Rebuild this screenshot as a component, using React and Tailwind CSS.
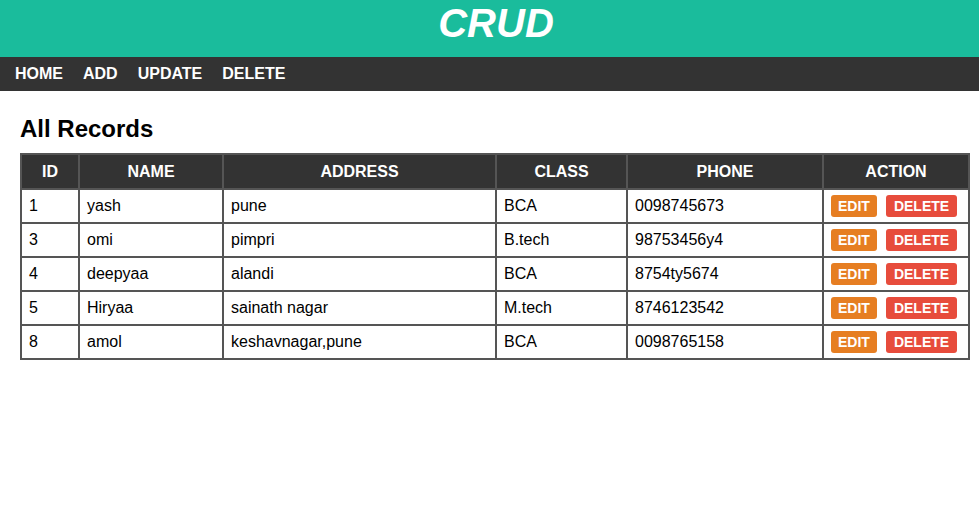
import React from "react";

const records = [
  { id: 1, name: "yash", address: "pune", cls: "BCA", phone: "0098745673" },
  { id: 3, name: "omi", address: "pimpri", cls: "B.tech", phone: "98753456y4" },
  { id: 4, name: "deepyaa", address: "alandi", cls: "BCA", phone: "8754ty5674" },
  { id: 5, name: "Hiryaa", address: "sainath nagar", cls: "M.tech", phone: "8746123542" },
  { id: 8, name: "amol", address: "keshavnagar,pune", cls: "BCA", phone: "0098765158" },
];

const cols = [
  { label: "ID", w: "w-[58px]" },
  { label: "NAME", w: "w-[144px]" },
  { label: "ADDRESS", w: "w-[273px]" },
  { label: "CLASS", w: "w-[131px]" },
  { label: "PHONE", w: "w-[196px]" },
  { label: "ACTION", w: "w-[146px]" },
];

const App = () => {
  return (
    <div className="min-h-screen bg-white text-black font-['Liberation_Sans',Arial,sans-serif]">
      <header className="h-[57px] bg-[#1abc9c] flex items-center justify-center pl-[13px]">
        <h1 className="text-[40px] font-bold italic text-white leading-none -mt-[11px]">CRUD</h1>
      </header>
      <nav className="h-[34px] bg-[#333333] flex items-center pl-[5px]">
        {["HOME", "ADD", "UPDATE", "DELETE"].map((item) => (
          <a key={item} href="#" className="px-[10px] text-base font-bold text-white">
            {item}
          </a>
        ))}
      </nav>

      <main className="px-[20px]">
        <h2 className="text-[24px] font-bold mt-[24px] mb-[10px] leading-[28px]">All Records</h2>
        <table className="table-fixed w-[948px] border-collapse border-2 border-[#555555]">
          <thead>
            <tr className="bg-[#333333] text-white">
              {cols.map((c) => (
                <th key={c.label} className={`${c.w} h-[35px] border-2 border-[#555555] text-base font-bold text-center`}>
                  {c.label}
                </th>
              ))}
            </tr>
          </thead>
          <tbody>
            {records.map((r) => (
              <tr key={r.id} className="h-[34px]">
                <td className="border-2 border-[#555555] px-[7px] text-base">{r.id}</td>
                <td className="border-2 border-[#555555] px-[7px] text-base">{r.name}</td>
                <td className="border-2 border-[#555555] px-[7px] text-base">{r.address}</td>
                <td className="border-2 border-[#555555] px-[7px] text-base">{r.cls}</td>
                <td className="border-2 border-[#555555] px-[7px] text-base">{r.phone}</td>
                <td className="border-2 border-[#555555] px-[7px]">
                  <div className="flex items-center gap-[9px]">
                    <button className="h-[22px] px-[7px] rounded-[3px] bg-[#e67e22] text-white text-[14px] font-bold leading-none">
                      EDIT
                    </button>
                    <button className="h-[22px] px-[8px] rounded-[3px] bg-[#e74c3c] text-white text-[14px] font-bold leading-none">
                      DELETE
                    </button>
                  </div>
                </td>
              </tr>
            ))}
          </tbody>
        </table>
      </main>
    </div>
  );
};

export default App;
